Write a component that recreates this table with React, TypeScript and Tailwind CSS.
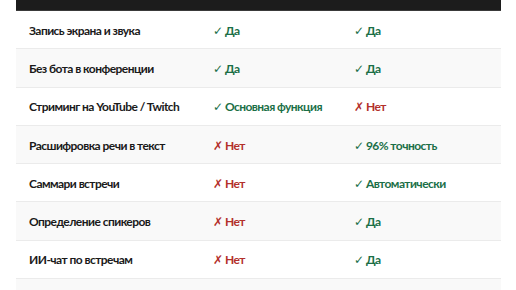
const rows: [string, [boolean, string], [boolean, string]][] = [
  ['Запись экрана и звука', [true, 'Да'], [true, 'Да']],
  ['Без бота в конференции', [true, 'Да'], [true, 'Да']],
  ['Стриминг на YouTube / Twitch', [true, 'Основная функция'], [false, 'Нет']],
  ['Расшифровка речи в текст', [false, 'Нет'], [true, '96% точность']],
  ['Саммари встречи', [false, 'Нет'], [true, 'Автоматически']],
  ['Определение спикеров', [false, 'Нет'], [true, 'Да']],
  ['ИИ-чат по встречам', [false, 'Нет'], [true, 'Да']],
  ['', [true, ''], [true, '']],
]

function Cell({ ok, text }: { ok: boolean; text: string }) {
  if (!text) return <div />
  return (
    <div className={`pl-[13px] whitespace-nowrap ${ok ? 'text-[#1b6f47]' : 'text-[#b3302b]'}`}>
      <span className="font-['DejaVu_Sans',sans-serif] font-normal">{ok ? '✓' : '✗'}</span> {text}
    </div>
  )
}

export default function App() {
  return (
    <div className="w-[516px] h-[290px] overflow-hidden bg-white font-['Lato','Noto_Sans',sans-serif]">
      <div className="mx-[16px] w-[485px]">
        <div className="h-[11px] bg-[#1c1c1c] border-b border-[#3a3a3a]" />
        {rows.map(([name, a, b], i) => (
          <div
            key={i}
            className={`grid grid-cols-[184px_141px_1fr] items-center h-[38.3px] pt-[2px] border-b border-[#ebebeb] text-[12px] tracking-[-0.55px] font-bold leading-none ${
              i % 2 === 1 ? 'bg-[#f9f9f9]' : 'bg-white'
            }`}
          >
            <div className="pl-[13px] whitespace-nowrap text-[#1a1a1a]">{name}</div>
            <Cell ok={a[0]} text={a[1]} />
            <Cell ok={b[0]} text={b[1]} />
          </div>
        ))}
      </div>
    </div>
  )
}
